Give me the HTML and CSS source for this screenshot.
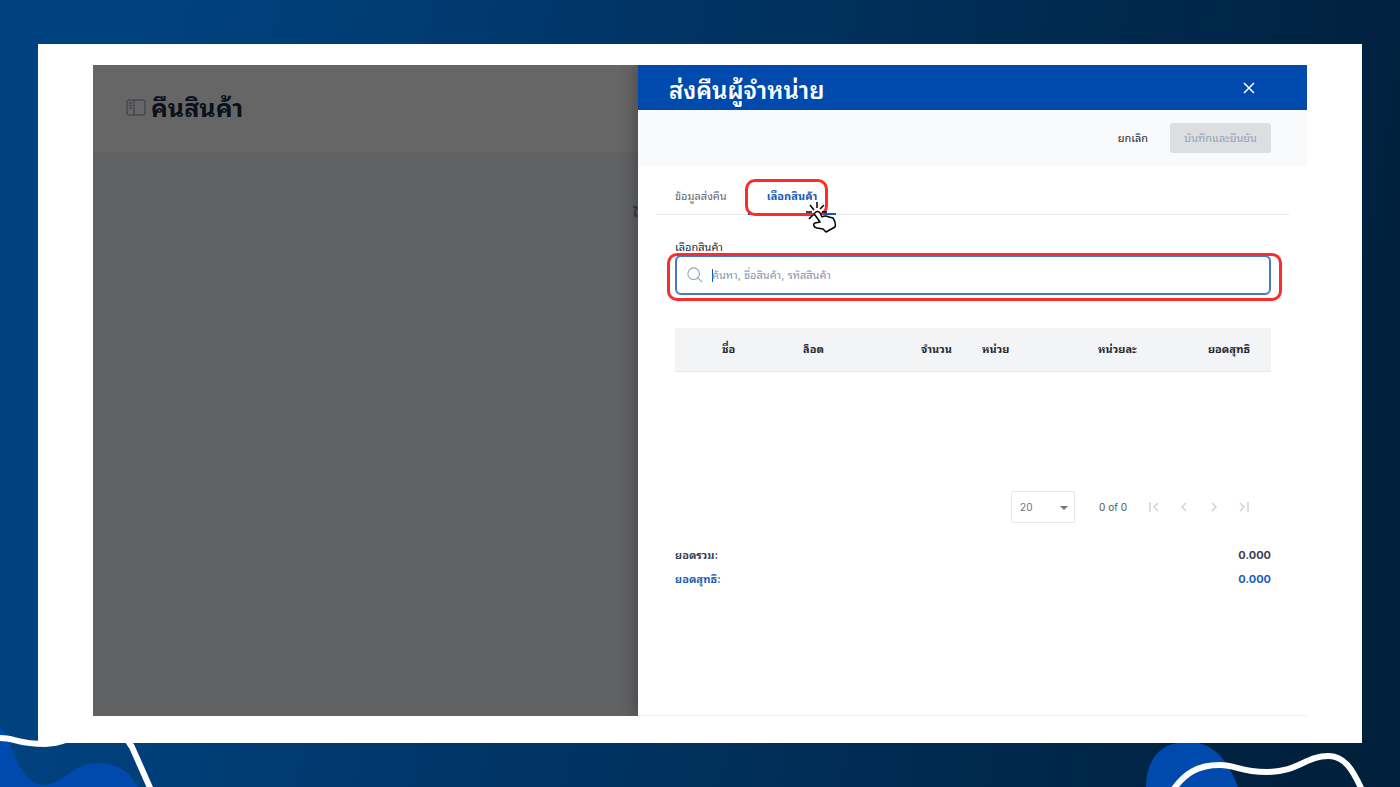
FILE: index.html
```html
<!DOCTYPE html>
<html lang="th">
<head>
<meta charset="utf-8">
<title>ส่งคืนผู้จำหน่าย</title>
<link rel="stylesheet" href="styles.css">
</head>
<body>
<main class="sheet">
  <div class="app">
    <section class="backdrop">
      <header class="page-header">
        <svg class="page-icon" viewBox="0 0 20 18" fill="none" stroke="currentColor" stroke-width="1.300"><rect x="1" y="1" width="18" height="15" rx="2"/><path d="M8 1v15M3 4h3M3 6.500h3M3 9h3"/></svg>
        <h1 class="page-title">คืนสินค้า</h1>
      </header>
      <div class="page-body"><span class="page-peek">ไ</span></div>
    </section>
    <section class="panel">
      <header class="panel-header">
        <h2 class="panel-title">ส่งคืนผู้จำหน่าย</h2>
        <button class="close" type="button" aria-label="ปิด"><svg viewBox="0 0 12 12" fill="none" stroke="currentColor" stroke-width="1.500"><path d="M1 1l10 10M11 1L1 11"/></svg></button>
      </header>
      <div class="actions">
        <button class="cancel" type="button">ยกเลิก</button>
        <button class="save" type="button" disabled>บันทึกและยืนยัน</button>
      </div>
      <nav class="tabs">
        <button class="tab" type="button">ข้อมูลส่งคืน</button>
        <button class="tab tab-active" type="button">เลือกสินค้า
          <span class="mark mark-tab"></span>
          <svg class="hand" viewBox="0 0 32 34" fill="none" stroke="#000" stroke-width="1.500" stroke-linejoin="round"><path d="M12 1v6M5 4l4 5M19 4l-4 4M1 11h6M17 11h5M4 18l4-4"/><path fill="#fff" d="M10 12c1-2 4-2 5 0l2 4c3-2 5-1 7 0l4 1c2 3 3 6 2 9l-9 5-3-3-6-1c-4-1-4-4-2-5l5-1-5-7c-1-1-1-2 0-2z"/></svg>
        </button>
      </nav>
      <div class="content">
        <label class="field-label" for="search">เลือกสินค้า</label>
        <div class="search">
          <svg class="search-icon" viewBox="0 0 18 18" fill="none" stroke="currentColor" stroke-width="1.200"><circle cx="7.500" cy="7.500" r="6.500"/><path d="M12 12l5 5"/></svg>
          <span class="caret"></span>
          <input class="search-input" id="search" type="text" placeholder="ค้นหา, ชื่อสินค้า, รหัสสินค้า">
          <span class="mark mark-search"></span>
        </div>
        <table class="items">
          <thead><tr><th class="c-name">ชื่อ</th><th class="c-lot">ล็อต</th><th class="c-qty num">จำนวน</th><th class="c-unit">หน่วย</th><th class="c-price num">หน่วยละ</th><th class="c-net num">ยอดสุทธิ</th></tr></thead>
        </table>
        <div class="pager">
          <div class="size">
            <select class="size-select" aria-label="จำนวนต่อหน้า"><option>20</option></select>
            <svg class="size-arrow" viewBox="0 0 8 4"><path fill="currentColor" d="M0 0h8L4 4z"/></svg>
          </div>
          <span class="range">0 of 0</span>
          <div class="page-buttons">
            <button class="page-button" type="button" disabled aria-label="หน้าแรก"><svg viewBox="0 0 12 12"><path d="M2 1v10M10 2L6 6l4 4"/></svg></button>
            <button class="page-button" type="button" disabled aria-label="ก่อนหน้า"><svg viewBox="0 0 12 12"><path d="M8 2L4 6l4 4"/></svg></button>
            <button class="page-button" type="button" disabled aria-label="ถัดไป"><svg viewBox="0 0 12 12"><path d="M4 2l4 4-4 4"/></svg></button>
            <button class="page-button" type="button" disabled aria-label="หน้าสุดท้าย"><svg viewBox="0 0 12 12"><path d="M2 2l4 4-4 4M10 1v10"/></svg></button>
          </div>
        </div>
        <dl class="totals">
          <div class="total"><dt>ยอดรวม:</dt><dd>0.000</dd></div>
          <div class="total total-net"><dt>ยอดสุทธิ:</dt><dd>0.000</dd></div>
        </dl>
      </div>
    </section>
  </div>
</main>
<svg class="wave wave-left" viewBox="0 0 200 87" fill="none">
  <path fill="#004aad" d="M0 28C5 32 8 37 11 46C18 70 30 84 43 85C63 85 72 63 98 63C118 63 130 72 138 87H0z"/>
  <path stroke="#fff" stroke-width="6" d="M0 38C15 38 18 44 45 44C58 44 65 40 78 36C100 30 122 28 132 47L151 90"/>
</svg>
<svg class="wave wave-right" viewBox="0 0 280 87" fill="none">
  <path fill="#004aad" d="M26 87C26 65 36 43 65 42C94 40 109 63 118 87z"/>
  <path stroke="#fff" stroke-width="6" d="M53 90C65 73 78 65 100 65C117 65 119 72 147 72C178 72 186 56 208 56C224 56 232 68 242 90"/>
</svg>
</body>
</html>
```
FILE: styles.css
```css
* { box-sizing: border-box; }
body {
  margin: 0;
  min-height: 100vh;
  padding: 44px 38px;
  position: relative;
  overflow: hidden;
  display: flex;
  background: linear-gradient(100deg, #00427f 10%, #00203c 95%);
  font-family: Inter, Tahoma, "Noto Sans Thai Looped", Loma, Waree, Garuda, "Liberation Sans", sans-serif;
  font-size: 11px;
  line-height: 16px;
  color: #1f2937;
}
button, input, select { font: inherit; color: inherit; border: 0; padding: 0; margin: 0; background: none; }
h1, h2, dl, dd { margin: 0; }
svg { display: block; }
.sheet { flex: 1; display: flex; padding: 21px 55px 27px; background: #fff; }
.app { flex: 1; display: grid; grid-template-columns: 545fr 669fr; }
.backdrop { display: flex; flex-direction: column; background: #616264; }
.page-header { display: flex; align-items: center; gap: 5px; height: 88px; padding: 0 0 2px 33px; background: #666; border-bottom: 1px solid #5d6064; }
.page-icon { width: 20px; height: 18px; color: #414851; }
.page-title { font-size: 25px; line-height: 32px; color: #0b111b; }
.page-body { flex: 1; display: flex; justify-content: flex-end; overflow: hidden; padding-top: 50px; }
.page-peek { width: 5px; overflow: hidden; font-size: 12px; line-height: 20px; color: #202833; }
.panel { position: relative; display: flex; flex-direction: column; background: #fff; border-bottom: 1px solid #eef0f5; box-shadow: -4px 0 14px rgba(0, 0, 0, .25); clip-path: inset(0 0 0 -24px); }
.panel-header { display: flex; justify-content: space-between; align-items: center; height: 45px; padding: 0 52px 0 31px; background: #004aad; color: #fff; }
.panel-title { padding-top: 7px; font-size: 24px; line-height: 32px; font-weight: 600; }
.close svg { width: 12px; height: 12px; }
.actions { display: flex; justify-content: flex-end; align-items: center; gap: 22px; height: 56px; padding-right: 36px; background: #f8fafc; }
.save { width: 101px; height: 30px; border-radius: 3px; background: #dcdee0; color: #94a3b8; }
.tabs { display: flex; gap: 2px; height: 49px; margin: 0 18px; border-bottom: 1px solid #e2e8f0; }
.tab { padding: 12px 19px 0; color: #64686f; white-space: nowrap; }
.tab-active { position: relative; color: #1559b7; font-weight: 700; border-bottom: 2px solid #1559b7; height: 49px; }
.mark { position: absolute; border: 3px solid #fb2b2e; border-radius: 10px; pointer-events: none; }
.mark-tab { left: -3px; right: 8px; top: 13px; height: 37px; }
.hand { position: absolute; right: -1px; top: 35px; width: 32px; height: 34px; }
.content { flex: 1; padding: 24px 36px 0 37px; }
.field-label { display: block; }
.search { position: relative; display: flex; align-items: center; gap: 9px; height: 40px; padding-left: 10px; border: 2px solid #447bc8; border-radius: 6px; }
.search-icon { width: 16px; height: 16px; color: #94a3b8; }
.caret { width: 1px; height: 13px; background: #1559b7; margin-right: -10px; }
.search-input { flex: 1; height: 30px; outline: 0; }
.search-input::placeholder { color: #8796b0; opacity: 1; }
.mark-search { left: -10px; right: -13px; top: -4px; height: 48px; }
.items { width: 100%; margin-top: 33px; border-collapse: collapse; table-layout: fixed; background: #f3f4f6; }
.items th { height: 43px; padding: 0; text-align: left; border-bottom: 1px solid #e5e7eb; color: #25282d; }
.items .num { text-align: right; }
.items .c-name { width: 128px; padding-left: 47px; }
.items .c-lot { width: 13%; }
.items .c-qty { width: 12%; }
.items .c-unit { width: 16%; padding-left: 30px; }
.items .c-price { width: 15%; }
.items .c-net { padding-right: 21px; }
.pager { display: flex; justify-content: flex-end; align-items: center; margin-top: 119px; padding-right: 21px; }
.size { position: relative; width: 64px; height: 32px; }
.size-select { width: 100%; height: 100%; padding-left: 8px; appearance: none; border: 1px solid #e2e8f0; border-radius: 2px; color: #6b7280; font-size: 10px; }
.size-arrow { position: absolute; right: 7px; top: 15px; width: 8px; height: 4px; color: #6b7280; pointer-events: none; }
.range { margin-left: 24px; color: #4b5563; font-size: 10px; }
.page-buttons { display: flex; gap: 18px; margin-left: 21px; }
.page-button svg { width: 12px; height: 12px; fill: none; stroke: #d2d4d7; stroke-width: 1.500; }
.totals { margin-top: 20px; font-weight: 700; color: #3b4453; }
.total { display: flex; justify-content: space-between; line-height: 24px; }
.total-net { color: #1d5fbd; }
.wave { position: absolute; bottom: 0; height: 87px; }
.wave-left { left: 0; width: 200px; }
.wave-right { right: 0; width: 280px; clip-path: inset(43px 0 0 0); }
```
